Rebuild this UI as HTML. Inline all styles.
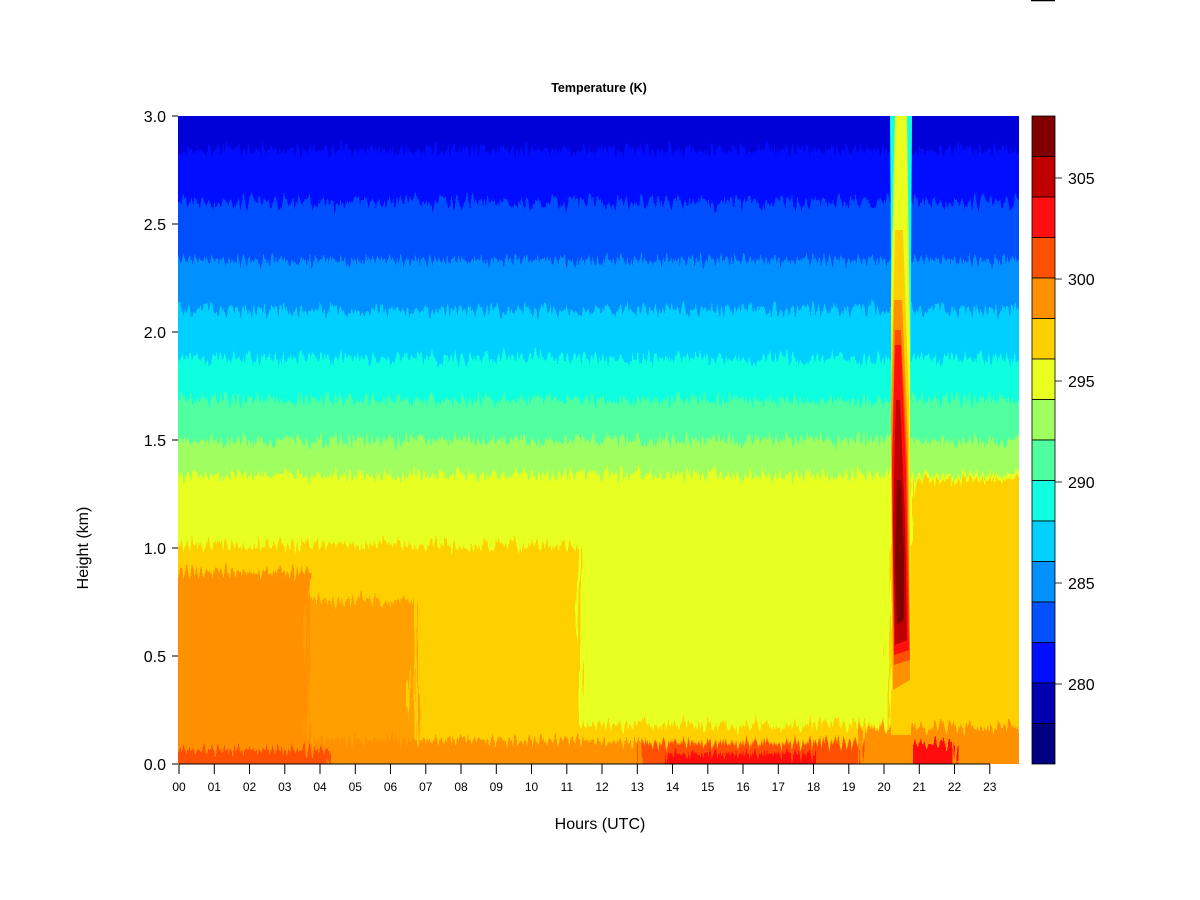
<!DOCTYPE html>
<html><head><style>
html,body{margin:0;padding:0;background:#fff;width:1200px;height:900px;overflow:hidden}
svg{display:block}
text{font-family:"Liberation Sans",Arial,sans-serif;fill:#000}
</style></head><body>
<svg width="1200" height="900" viewBox="0 0 1200 900">
<defs>
<clipPath id="pc"><rect x="178" y="116" width="841" height="648"/></clipPath>
<filter id="st" x="-5%" y="-5%" width="110%" height="110%">
<feTurbulence type="fractalNoise" baseFrequency="0.35 0.012" numOctaves="2" seed="3" result="n"/>
<feDisplacementMap in="SourceGraphic" in2="n" scale="30" xChannelSelector="G" yChannelSelector="R"/>
</filter>
</defs>
<text x="599" y="92" font-size="12.5" font-weight="bold" text-anchor="middle">Temperature (K)</text>
<g clip-path="url(#pc)">
<g filter="url(#st)">
<rect x="150" y="90" width="900" height="700" fill="#FFD000"/>
<rect x="150" y="90" width="900" height="455" fill="#E8FF20"/>
<rect x="150" y="90" width="900" height="385" fill="#A0FF60"/>
<rect x="150" y="90" width="900" height="350" fill="#50FFA0"/>
<rect x="150" y="90" width="900" height="310" fill="#10FFE0"/>
<rect x="150" y="90" width="900" height="268" fill="#00D0FF"/>
<rect x="150" y="90" width="900" height="220" fill="#0090FF"/>
<rect x="150" y="90" width="900" height="170" fill="#0050FF"/>
<rect x="150" y="90" width="900" height="112" fill="#0010FF"/>
<rect x="150" y="90" width="900" height="60" fill="#0000D8"/>
<rect x="150" y="545" width="430" height="240" fill="#FFD000"/>
<rect x="150" y="572" width="160" height="220" fill="#FF9000"/>
<rect x="310" y="600" width="105" height="190" fill="#FF9000" opacity="0.75"/>
<rect x="580" y="545" width="310" height="185" fill="#E8FF20"/>
<rect x="580" y="725" width="310" height="45" fill="#FFD000"/>
<rect x="590" y="742" width="300" height="30" fill="#FF9000"/>
<rect x="150" y="740" width="440" height="40" fill="#FF9000"/>
<rect x="150" y="750" width="180" height="30" fill="#FF5000"/>
<rect x="640" y="744" width="240" height="30" fill="#FF5000"/>
<rect x="665" y="754" width="150" height="20" fill="#FF1010"/>
<rect x="912" y="480" width="140" height="300" fill="#FFD000"/>
<rect x="860" y="728" width="190" height="50" fill="#FF9000"/>
<rect x="905" y="744" width="50" height="30" fill="#FF1010"/>
</g>
<polygon points="890,116 912,116 911,280 910,700 893,700 891,280" fill="#10FFE0"/>
<polygon points="895,116 907,116 910,340 911,700 893,700 891,300" fill="#E8FF20"/>
<polygon points="895,230 903,230 909,400 911,690 892,690 891,400" fill="#FFD000"/>
<polygon points="894,300 902,300 908,440 910,680 893,690 891,420" fill="#FF9000"/>
<polygon points="895,330 901,330 907,460 910,660 894,665 892,450" fill="#FF5000"/>
<polygon points="895,345 901,345 906,470 909,650 894,655 892,470" fill="#FF1010"/>
<polygon points="896,400 900,400 905,520 907,640 895,645 893,520" fill="#C00000"/>
<polygon points="897,480 901,480 904,560 904,620 897,625 895,560" fill="#800000"/>
<rect x="891" y="690" width="20" height="45" fill="#FFD000"/>
<rect x="889" y="735" width="24" height="29" fill="#FF9000"/>
</g>
<g stroke="#000" stroke-width="1">
<line x1="172" y1="116" x2="178" y2="116"/><line x1="172" y1="224" x2="178" y2="224"/>
<line x1="172" y1="332" x2="178" y2="332"/><line x1="172" y1="440" x2="178" y2="440"/>
<line x1="172" y1="548" x2="178" y2="548"/><line x1="172" y1="656" x2="178" y2="656"/>
<line x1="172" y1="764" x2="178" y2="764"/>
<line x1="179" y1="764" x2="990" y2="764"/>
</g>
<g font-size="16" text-anchor="end">
<text x="166" y="122">3.0</text><text x="166" y="230">2.5</text><text x="166" y="338">2.0</text>
<text x="166" y="446">1.5</text><text x="166" y="554">1.0</text><text x="166" y="662">0.5</text><text x="166" y="770">0.0</text>
</g>
<g font-size="12" text-anchor="middle">
<line x1="179" y1="764" x2="179" y2="774" stroke="#000"/><text x="179" y="791">00</text>
<line x1="214.3" y1="764" x2="214.3" y2="774" stroke="#000"/><text x="214.3" y="791">01</text>
<line x1="249.5" y1="764" x2="249.5" y2="774" stroke="#000"/><text x="249.5" y="791">02</text>
<line x1="284.8" y1="764" x2="284.8" y2="774" stroke="#000"/><text x="284.8" y="791">03</text>
<line x1="320" y1="764" x2="320" y2="774" stroke="#000"/><text x="320" y="791">04</text>
<line x1="355.3" y1="764" x2="355.3" y2="774" stroke="#000"/><text x="355.3" y="791">05</text>
<line x1="390.5" y1="764" x2="390.5" y2="774" stroke="#000"/><text x="390.5" y="791">06</text>
<line x1="425.8" y1="764" x2="425.8" y2="774" stroke="#000"/><text x="425.8" y="791">07</text>
<line x1="461" y1="764" x2="461" y2="774" stroke="#000"/><text x="461" y="791">08</text>
<line x1="496.3" y1="764" x2="496.3" y2="774" stroke="#000"/><text x="496.3" y="791">09</text>
<line x1="531.5" y1="764" x2="531.5" y2="774" stroke="#000"/><text x="531.5" y="791">10</text>
<line x1="566.8" y1="764" x2="566.8" y2="774" stroke="#000"/><text x="566.8" y="791">11</text>
<line x1="602" y1="764" x2="602" y2="774" stroke="#000"/><text x="602" y="791">12</text>
<line x1="637.3" y1="764" x2="637.3" y2="774" stroke="#000"/><text x="637.3" y="791">13</text>
<line x1="672.5" y1="764" x2="672.5" y2="774" stroke="#000"/><text x="672.5" y="791">14</text>
<line x1="707.8" y1="764" x2="707.8" y2="774" stroke="#000"/><text x="707.8" y="791">15</text>
<line x1="743" y1="764" x2="743" y2="774" stroke="#000"/><text x="743" y="791">16</text>
<line x1="778.3" y1="764" x2="778.3" y2="774" stroke="#000"/><text x="778.3" y="791">17</text>
<line x1="813.5" y1="764" x2="813.5" y2="774" stroke="#000"/><text x="813.5" y="791">18</text>
<line x1="848.8" y1="764" x2="848.8" y2="774" stroke="#000"/><text x="848.8" y="791">19</text>
<line x1="884" y1="764" x2="884" y2="774" stroke="#000"/><text x="884" y="791">20</text>
<line x1="919.3" y1="764" x2="919.3" y2="774" stroke="#000"/><text x="919.3" y="791">21</text>
<line x1="954.5" y1="764" x2="954.5" y2="774" stroke="#000"/><text x="954.5" y="791">22</text>
<line x1="989.8" y1="764" x2="989.8" y2="774" stroke="#000"/><text x="989.8" y="791">23</text>
</g>
<text x="600" y="829" font-size="16" text-anchor="middle">Hours (UTC)</text>
<text x="88" y="548" font-size="16" text-anchor="middle" transform="rotate(-90 88 548)">Height (km)</text>
<g stroke="#000" stroke-width="0.8">
<rect x="1032" y="116" width="23" height="40.5" fill="#800000"/>
<rect x="1032" y="156.5" width="23" height="40.5" fill="#C00000"/>
<rect x="1032" y="197" width="23" height="40.5" fill="#FF1010"/>
<rect x="1032" y="237.5" width="23" height="40.5" fill="#FF5000"/>
<rect x="1032" y="278" width="23" height="40.5" fill="#FF9000"/>
<rect x="1032" y="318.5" width="23" height="40.5" fill="#FFD000"/>
<rect x="1032" y="359" width="23" height="40.5" fill="#E8FF20"/>
<rect x="1032" y="399.5" width="23" height="40.5" fill="#A0FF60"/>
<rect x="1032" y="440" width="23" height="40.5" fill="#50FFA0"/>
<rect x="1032" y="480.5" width="23" height="40.5" fill="#10FFE0"/>
<rect x="1032" y="521" width="23" height="40.5" fill="#00D0FF"/>
<rect x="1032" y="561.5" width="23" height="40.5" fill="#0090FF"/>
<rect x="1032" y="602" width="23" height="40.5" fill="#0050FF"/>
<rect x="1032" y="642.5" width="23" height="40.5" fill="#0010FF"/>
<rect x="1032" y="683" width="23" height="40.5" fill="#0000B0"/>
<rect x="1032" y="723.5" width="23" height="40.5" fill="#000080"/>
<line x1="1055" y1="178" x2="1062" y2="178"/><line x1="1055" y1="279" x2="1062" y2="279"/>
<line x1="1055" y1="381" x2="1062" y2="381"/><line x1="1055" y1="482" x2="1062" y2="482"/>
<line x1="1055" y1="583" x2="1062" y2="583"/><line x1="1055" y1="684" x2="1062" y2="684"/>
</g>
<g font-size="16">
<text x="1068" y="184">305</text><text x="1068" y="285">300</text><text x="1068" y="387">295</text>
<text x="1068" y="488">290</text><text x="1068" y="589">285</text><text x="1068" y="690">280</text>
</g>
<line x1="1031" y1="0.5" x2="1055" y2="0.5" stroke="#000" stroke-width="1.5"/>
</svg>
</body></html>
